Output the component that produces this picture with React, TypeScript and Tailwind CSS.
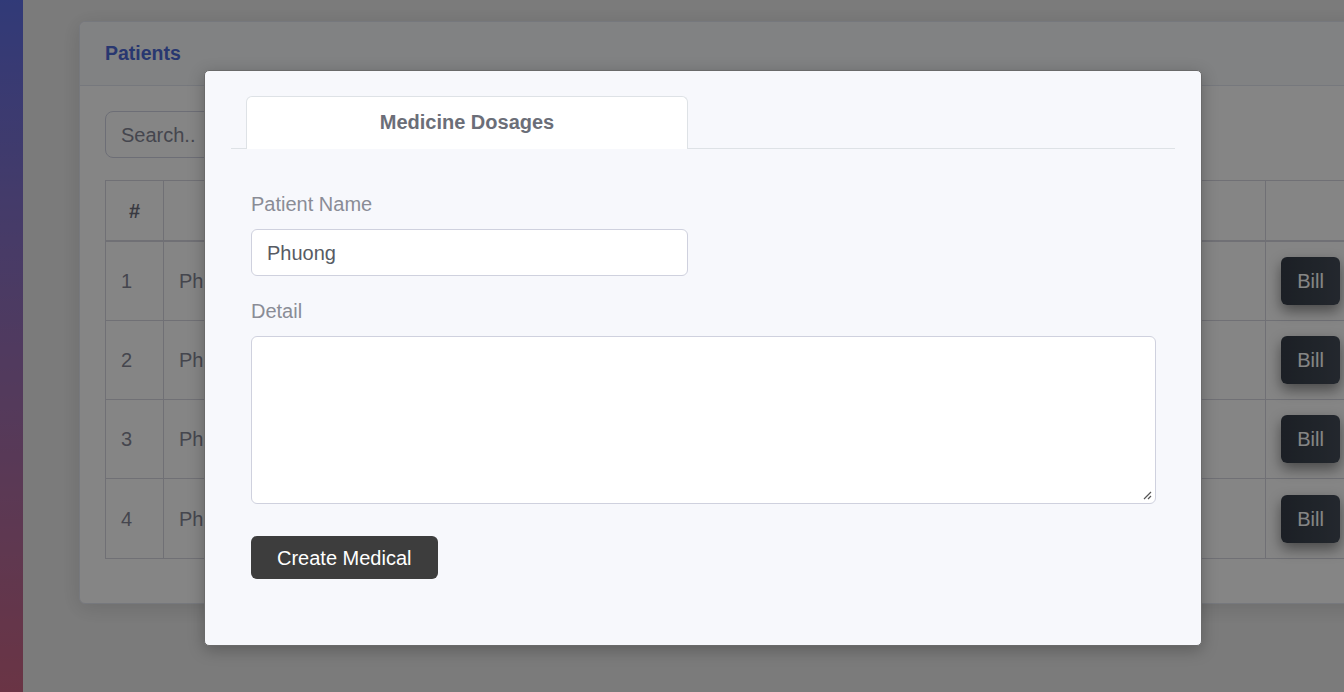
import React from "react";

const rows = [1, 2, 3, 4];

export default function App() {
  return (
    <div
      className="relative w-[1344px] h-[692px] overflow-hidden bg-[#ececec] flex"
      style={{ fontFamily: '"Liberation Sans", Arial, sans-serif' }}
    >
      {/* sidebar */}
      <div className="w-[23px] shrink-0 h-full bg-gradient-to-b from-[#5f6fe6] to-[#cb6584]" />
      {/* main */}
      <div className="flex-1 overflow-hidden pl-[56px] pt-[21px]">
        <div className="w-[1300px] h-[583px] bg-white rounded-[6px] shadow-[0_4px_20px_rgba(0,0,0,0.12)] border border-[#e3e6f0]">
          <div className="h-[64px] border-b border-[#e3e6f0] bg-[#f8f9fc] rounded-t-[6px] flex items-center pl-[25px]">
            <span className="text-[19.5px] font-bold text-[#4e6ad6]">Patients</span>
          </div>
          <div className="px-[25px] pt-[25px]">
            <div className="w-[400px] h-[47px] border border-[#d1d3e2] rounded-[8px] flex items-center pl-[15px] text-[20px] text-[#858796]">
              Search..
            </div>
            <div className="mt-[22px] w-[1300px] border border-[#d6d7e0]">
              <div className="flex h-[61px] border-b-2 border-[#d6d7e0] text-[#6e707e] text-[20px]">
                <div className="w-[58px] border-r border-[#d6d7e0] flex items-center justify-center font-bold">#</div>
                <div className="w-[1102px] border-r border-[#d6d7e0]" />
                <div className="flex-1" />
              </div>
              {rows.map((n) => (
                <div key={n} className="flex h-[79px] border-b border-[#d6d7e0] last:border-b-0 text-[20px] text-[#858796]">
                  <div className="w-[58px] border-r border-[#d6d7e0] flex items-center pl-[15px]">{n}</div>
                  <div className="w-[1102px] border-r border-[#d6d7e0] flex items-center pl-[15px]">Phuong</div>
                  <div className="flex-1 flex items-center pl-[15px]">
                    <div className="w-[59px] h-[48px] rounded-[6px] bg-gradient-to-r from-[#363d48] to-[#444c58] shadow-[0_6px_14px_rgba(0,0,0,0.45)] text-white text-[20px] flex items-center justify-center">
                      Bill
                    </div>
                  </div>
                </div>
              ))}
            </div>
          </div>
        </div>
      </div>

      {/* overlay */}
      <div className="absolute inset-0 bg-black/[0.48]" />

      {/* modal */}
      <div className="absolute left-[204px] top-[70px] w-[998px] h-[576px] bg-[#f7f8fc] rounded-[5px] border border-[#6a6a6a] shadow-[0_4px_16px_rgba(0,0,0,0.25)] px-[26px] pt-[25px]">
        <div className="flex border-b border-[#dee2e6] pl-[15px]">
          <div className="w-[442px] h-[53px] -mb-px pb-[2px] bg-white border border-b-0 border-[#dee2e6] rounded-t-[6px] flex items-center justify-center text-[20px] font-bold text-[#6b6e78]">
            Medicine Dosages
          </div>
        </div>
        <div className="px-[20px] pt-[43px]">
          <div className="text-[20px] leading-[24px] text-[#8a8c96]">Patient Name</div>
          <div className="mt-[13px] w-[437px] h-[47px] bg-white border border-[#cfd1de] rounded-[6px] flex items-center pl-[15px] text-[20px] text-[#575b64]">
            Phuong
          </div>
          <div className="mt-[23px] text-[20px] leading-[24px] text-[#8a8c96]">Detail</div>
          <div className="relative mt-[13px] w-[905px] h-[168px] bg-white border border-[#cfd1de] rounded-[6px]">
            <svg className="absolute right-[3px] bottom-[3px]" width="10" height="10" viewBox="0 0 10 10">
              <path d="M9 2 L2 9 M9 6 L6 9" stroke="#555" strokeWidth="1.2" />
            </svg>
          </div>
          <button className="mt-[32px] h-[43px] px-[26px] bg-[#3d3d3d] rounded-[6px] text-white text-[20px]">
            Create Medical
          </button>
        </div>
      </div>
    </div>
  );
}
